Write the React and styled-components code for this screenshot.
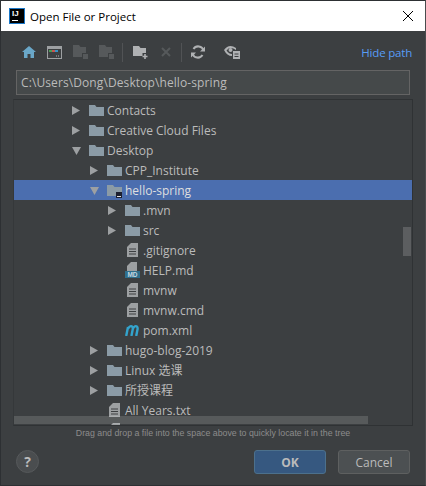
import styled, { createGlobalStyle } from 'styled-components'

const GlobalStyle = createGlobalStyle`
  html, body { margin: 0; padding: 0; background: #3c3f41; }
  * { box-sizing: border-box; }
`

const Dialog = styled.div`
  width: 426px;
  height: 486px;
  display: flex;
  flex-direction: column;
  background: #3c3f41;
  border: 1px solid #2d3033;
  border-right-color: #4a4c4e;
  font-family: "Open Sans", "Noto Sans CJK SC", sans-serif;
  overflow: hidden;
`
const TitleBar = styled.div`
  height: 30px;
  flex: none;
  background: #fff;
  display: flex;
  align-items: center;
  padding: 0 8px;
  gap: 5px;
  color: #000;
  font-size: 11.5px;
`
const TitleText = styled.span`
  flex: 1;
`
const AppLogo = styled.div`
  width: 16px;
  height: 16px;
  flex: none;
  position: relative;
  background: #000;
  border: 1px solid #1b78c8;
  color: #fff;
  font-family: "Liberation Sans", sans-serif;
  font-size: 8px;
  font-weight: 700;
  line-height: 9px;
  padding-left: 2px;
  &::after {
    content: '';
    position: absolute;
    left: 2px;
    bottom: 2px;
    width: 6px;
    height: 1px;
    background: #fff;
  }
`
const Toolbar = styled.div`
  height: 39px;
  flex: none;
  display: flex;
  align-items: center;
  padding: 3px 13px 0 21px;
`
const ToolIcon = styled.svg`
  display: block;
  flex: none;
  margin-right: ${(p) => p.$gap}px;
`
const ToolSep = styled.div`
  width: 1px;
  height: 19px;
  flex: none;
  background: #515355;
  margin-right: ${(p) => p.$gap}px;
`
const HidePath = styled.a`
  margin-left: auto;
  color: #589df6;
  font-size: 11.5px;
  letter-spacing: -0.2px;
`
const PathField = styled.div`
  height: 25px;
  flex: none;
  margin: 0 15px;
  padding: 0 4px;
  display: flex;
  align-items: center;
  background: #45494a;
  border: 1px solid #646464;
  color: #bbbbbb;
  font-size: 12px;
  letter-spacing: 0.1px;
`
const Tree = styled.div`
  position: relative;
  flex: none;
  height: 327px;
  margin: 4px 12px 0;
  border: 1px solid #2f3234;
  border-left-color: #35383a;
  overflow: hidden;
`
const Row = styled.div`
  height: 20px;
  display: flex;
  align-items: center;
  padding-left: ${(p) => 58 + p.$level * 18}px;
  background: ${(p) => (p.$selected ? '#4b6eaf' : 'transparent')};
  color: ${(p) => (p.$selected ? '#dfdfdf' : '#bbbbbb')};
  font-size: 12px;
  white-space: nowrap;
`
const ArrowSlot = styled.span`
  width: 17px;
  flex: none;
  display: flex;
`
const IconSlot = styled.span`
  position: relative;
  width: 18px;
  height: 16px;
  flex: none;
  display: flex;
  align-items: center;
`
const GitBadge = styled.span`
  position: absolute;
  left: 9px;
  bottom: 0;
  width: 6px;
  height: 6px;
  background: #1d2030;
  &::after {
    content: '';
    position: absolute;
    left: 1px;
    bottom: 1px;
    width: 4px;
    height: 1px;
    background: #e0e0e0;
  }
`
const VScroll = styled.div`
  position: absolute;
  top: 127px;
  right: 1px;
  width: 8px;
  height: 29px;
  background: #5c5e60;
`
const HScroll = styled.div`
  position: absolute;
  left: 0;
  bottom: 1px;
  width: 354px;
  height: 8px;
  background: rgba(255, 255, 255, 0.14);
`
const Hint = styled.div`
  flex: none;
  height: 14px;
  display: flex;
  align-items: center;
  justify-content: center;
  color: #8c8c8c;
  font-family: "Liberation Sans", sans-serif;
  font-size: 8.8px;
`
const Footer = styled.div`
  flex: 1;
  display: flex;
  align-items: flex-start;
  padding: 10px 15px 0;
  gap: 12px;
`
const HelpButton = styled.div`
  width: 23px;
  height: 23px;
  margin-right: auto;
  border-radius: 50%;
  background: #4a4d4f;
  border: 1px solid #56595b;
  color: #bbbbbb;
  font-size: 14px;
  font-weight: 700;
  display: flex;
  align-items: center;
  justify-content: center;
`
const Button = styled.div`
  width: 72px;
  height: 24px;
  border-radius: 3px;
  display: flex;
  align-items: center;
  justify-content: center;
  font-size: 12px;
  color: #bbbbbb;
  font-weight: ${(p) => (p.$primary ? 700 : 400)};
  background: ${(p) => (p.$primary ? '#365880' : '#4c5052')};
  border: 1px solid ${(p) => (p.$primary ? '#4c708c' : '#5e6060')};
`

const Arrow = ({ open }) => (
  <svg width="9" height="9" viewBox="0 0 9 9">
    {open ? <path d="M0 1 H9 L4.5 9 Z" fill="#9da0a2" /> : <path d="M0 0 L8 4.5 L0 9 Z" fill="#9da0a2" />}
  </svg>
)

const Folder = () => (
  <svg width="15" height="11" viewBox="0 0 15 11">
    <path d="M0 0 H6 L7.5 2 H15 V11 H0 Z" fill="#8b9ba6" />
  </svg>
)

const FileIcon = () => (
  <svg width="11" height="14" viewBox="0 0 11 14" style={{ marginLeft: 2 }}>
    <path d="M4 0 H11 V14 H0 V4 Z" fill="#9da0a2" />
    <path d="M2 6 H9 M2 8.5 H9 M2 11 H9" stroke="#3c3f41" strokeWidth="1" />
  </svg>
)

const MdIcon = () => (
  <svg width="16" height="16" viewBox="0 0 16 16">
    <path d="M6 0 H12 V9 H2 V4 Z" fill="#9da0a2" />
    <rect x="0" y="9" width="15" height="7" fill="#2f6f8c" />
    <text x="7.5" y="15" textAnchor="middle" fontFamily="Liberation Sans" fontWeight="700" fontSize="6.5" fill="#c4d8e2">MD</text>
  </svg>
)

const MavenIcon = () => (
  <svg width="15" height="12" viewBox="0 0 15 12">
    <path d="M1.2 12 L3 3 M3 4.5 Q5.5 1 7.2 2.6 Q8.2 3.6 7.6 6 L6.4 12 M7.8 4.5 Q10.3 1 12 2.6 Q13 3.6 12.4 6 L11.2 12" fill="none" stroke="#33a3cc" strokeWidth="2.4" />
  </svg>
)

const rows = [
  { name: 'Contacts', level: 0, kind: 'closed' },
  { name: 'Creative Cloud Files', level: 0, kind: 'closed' },
  { name: 'Desktop', level: 0, kind: 'open' },
  { name: 'CPP_Institute', level: 1, kind: 'closed' },
  { name: 'hello-spring', level: 1, kind: 'open', selected: true },
  { name: '.mvn', level: 2, kind: 'closed' },
  { name: 'src', level: 2, kind: 'closed' },
  { name: '.gitignore', level: 2, kind: 'file' },
  { name: 'HELP.md', level: 2, kind: 'md' },
  { name: 'mvnw', level: 2, kind: 'file' },
  { name: 'mvnw.cmd', level: 2, kind: 'file' },
  { name: 'pom.xml', level: 2, kind: 'maven' },
  { name: 'hugo-blog-2019', level: 1, kind: 'closed' },
  { name: 'Linux 选课', level: 1, kind: 'closed' },
  { name: '所授课程', level: 1, kind: 'closed' },
  { name: 'All Years.txt', level: 1, kind: 'file' },
  { name: '', level: 1, kind: 'file' },
]

const rowIcon = (row) => {
  if (row.kind === 'file') return <FileIcon />
  if (row.kind === 'md') return <MdIcon />
  if (row.kind === 'maven') return <MavenIcon />
  return <Folder />
}

export default function App() {
  return (
    <Dialog>
      <GlobalStyle />
      <TitleBar>
        <AppLogo>IJ</AppLogo>
        <TitleText>Open File or Project</TitleText>
        <svg width="12" height="12" viewBox="0 0 12 12" style={{ marginRight: 3 }}>
          <path d="M1 1 L11 11 M11 1 L1 11" stroke="#000" strokeWidth="1" />
        </svg>
      </TitleBar>

      <Toolbar>
        <ToolIcon $gap={11} width="14" height="12" viewBox="0 0 14 12">
          <path d="M7 0 L14 6 H12 V12 H8.5 V8 H5.5 V12 H2 V6 H0 Z" fill="#6aa7c8" />
        </ToolIcon>
        <ToolIcon $gap={11} width="15" height="13" viewBox="0 0 15 13">
          <rect x="0.5" y="0.5" width="14" height="12" fill="#3c3f41" stroke="#9da0a2" />
          <rect x="1" y="1" width="13" height="2" fill="#9da0a2" />
          <rect x="2" y="4" width="3" height="2" fill="#499c54" />
          <rect x="5" y="4" width="3" height="2" fill="#c75450" />
          <rect x="8" y="4" width="3" height="2" fill="#3592c4" />
          <path d="M9 10 H13" stroke="#afb1b3" strokeDasharray="1 1" />
        </ToolIcon>
        <ToolIcon $gap={11} width="15" height="14" viewBox="0 0 15 14">
          <path d="M0 0 H6 L7.5 2 H13 V8 H9 V12 H0 Z" fill="#56595b" />
          <rect x="10" y="9" width="5" height="5" fill="#56595b" />
        </ToolIcon>
        <ToolIcon $gap={8} width="15" height="14" viewBox="0 0 15 14">
          <path d="M0 0 H6 L7.5 2 H13 V8 H9 V12 H0 Z" fill="#56595b" />
          <rect x="10" y="9" width="5" height="5" fill="#56595b" />
        </ToolIcon>
        <ToolSep $gap={10} />
        <ToolIcon $gap={13} width="15" height="14" viewBox="0 0 15 14">
          <path d="M0 1 H6 L7.5 3 H13 V8 H9.5 V11 H0 Z" fill="#afb1b3" />
          <path d="M12 9 V14 M9.5 11.5 H14.5" stroke="#afb1b3" strokeWidth="1.6" />
        </ToolIcon>
        <ToolIcon $gap={10} width="10" height="10" viewBox="0 0 10 10">
          <path d="M1 1 L9 9 M9 1 L1 9" stroke="#56595b" strokeWidth="2" />
        </ToolIcon>
        <ToolSep $gap={9} />
        <ToolIcon $gap={19} width="14" height="14" viewBox="0 0 14 14">
          <path d="M12.5 5.5 A5.5 5.5 0 0 0 2.5 4 M1.5 8.5 A5.5 5.5 0 0 0 11.5 10" fill="none" stroke="#afb1b3" strokeWidth="2" />
          <path d="M14 1.5 V6.5 H9 Z M0 12.5 V7.5 H5 Z" fill="#afb1b3" />
        </ToolIcon>
        <ToolIcon $gap={0} width="16" height="14" viewBox="0 0 16 14">
          <path d="M0 5 Q5 -2 12 3 L12 5 Q6 1 2.5 5.5 Q5 9 8 9 V11 Q3 11 0 5 Z" fill="#afb1b3" />
          <circle cx="6.5" cy="5" r="2" fill="#afb1b3" />
          <rect x="9" y="6" width="7" height="8" fill="#afb1b3" />
          <path d="M10.5 9 H14.5 M10.5 11.5 H14.5" stroke="#3c3f41" />
        </ToolIcon>
        <HidePath>Hide path</HidePath>
      </Toolbar>

      <PathField>C:\Users\Dong\Desktop\hello-spring</PathField>

      <Tree>
        {rows.map((row, i) => (
          <Row key={i} $level={row.level} $selected={row.selected}>
            <ArrowSlot>
              {row.kind === 'open' && <Arrow open />}
              {row.kind === 'closed' && <Arrow />}
            </ArrowSlot>
            <IconSlot>
              {rowIcon(row)}
              {row.selected && <GitBadge />}
            </IconSlot>
            {row.name}
          </Row>
        ))}
        <VScroll />
        <HScroll />
      </Tree>

      <Hint>Drag and drop a file into the space above to quickly locate it in the tree</Hint>

      <Footer>
        <HelpButton>?</HelpButton>
        <Button $primary>OK</Button>
        <Button>Cancel</Button>
      </Footer>
    </Dialog>
  )
}
